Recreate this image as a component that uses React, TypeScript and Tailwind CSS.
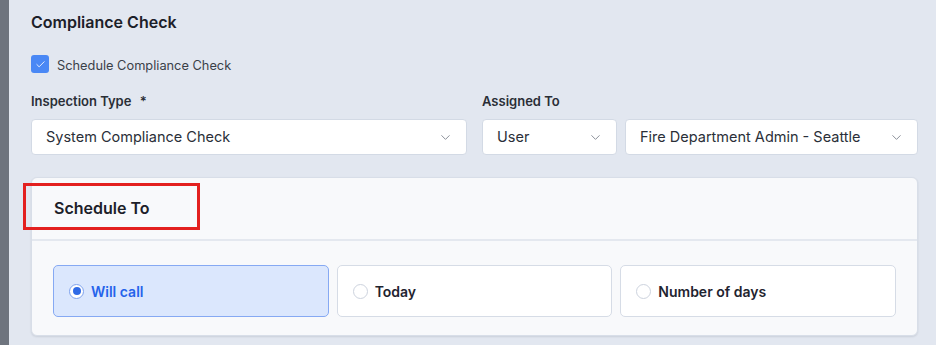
import { ChevronDown, Check } from "lucide-react";

type SelectProps = {
  value: string;
  className?: string;
};

function SelectBox({ value, className }: SelectProps) {
  return (
    <div
      className={`flex h-[36px] items-center justify-between rounded-[4px] border border-[#d3dae5] bg-white pl-[14px] pr-[13px] text-[14.5px] text-[#2a2f38] ${className ?? ""}`}
    >
      <span>{value}</span>
      <ChevronDown size={15} strokeWidth={1.4} className="text-[#7a808a]" />
    </div>
  );
}

function RadioOption({ label, selected }: { label: string; selected?: boolean }) {
  return (
    <div
      className={
        selected
          ? "flex h-[52px] items-center gap-[7px] rounded-[5px] border border-[#86a9f3] bg-[#dbe7fd] pl-[15px]"
          : "flex h-[52px] items-center gap-[7px] rounded-[5px] border border-[#d6dce6] bg-white pl-[15px]"
      }
    >
      {selected ? (
        <span className="flex h-[15px] w-[15px] items-center justify-center rounded-full border border-[#7ea2ee] bg-white">
          <span className="h-[8px] w-[8px] rounded-full bg-[#2f6ae6]" />
        </span>
      ) : (
        <span className="h-[15px] w-[15px] rounded-full border border-[#cdd3de] bg-white" />
      )}
      <span
        className={
          selected
            ? "text-[14px] font-semibold text-[#2563eb]"
            : "text-[14px] font-semibold text-[#1f2430]"
        }
      >
        {label}
      </span>
    </div>
  );
}

export default function App() {
  return (
    <div className="flex h-[345px] w-[936px] overflow-hidden bg-[#e2e7f0] font-['Inter',sans-serif]">
      <div className="w-[9px] shrink-0 bg-[#6e747e]" />
      <div className="flex flex-1 flex-col pl-[22px] pr-[18px] pt-[10px]">
        <h2 className="text-[16px] leading-[24px] font-semibold text-[#1c2029]">
          Compliance Check
        </h2>

        <label className="mt-[19px] flex items-center gap-[8px]">
          <span className="flex h-[18px] w-[18px] items-center justify-center rounded-[3px] bg-[#4a88f5]">
            <Check size={11} strokeWidth={1.8} className="text-white" />
          </span>
          <span className="pt-[3px] text-[12.8px] text-[#3a3f48]">
            Schedule Compliance Check
          </span>
        </label>

        <div className="mt-[17px] grid grid-cols-2 gap-[15px]">
          <div className="flex flex-col gap-[9px]">
            <div className="text-[13px] leading-[18px] font-semibold text-[#2a2e36]">
              Inspection Type <span className="ml-[5px]">*</span>
            </div>
            <SelectBox value="System Compliance Check" />
          </div>
          <div className="flex flex-col gap-[9px]">
            <div className="text-[13px] leading-[18px] font-semibold text-[#2a2e36]">
              Assigned To
            </div>
            <div className="flex gap-[8px]">
              <SelectBox value="User" className="w-[135px] shrink-0" />
              <SelectBox value="Fire Department Admin - Seattle" className="flex-1" />
            </div>
          </div>
        </div>

        <div className="relative mt-[22px] rounded-[6px] border border-[#d8dee8] bg-[#f8f9fb] shadow-[0_1px_2px_rgba(30,41,59,0.12)]">
          <div className="flex h-[63px] items-center border-b-2 border-[#e4e8ef] pl-[22px] pb-[1px]">
            <h3 className="text-[16px] font-semibold text-[#1c2029]">Schedule To</h3>
          </div>
          <div className="absolute left-[-9px] top-[5px] h-[47px] w-[177px] border-[3px] border-[#e3201f]" />
          <div className="grid grid-cols-3 gap-[8px] px-[21px] pt-[24px] pb-[18px]">
            <RadioOption label="Will call" selected />
            <RadioOption label="Today" />
            <RadioOption label="Number of days" />
          </div>
        </div>
      </div>
    </div>
  );
}
